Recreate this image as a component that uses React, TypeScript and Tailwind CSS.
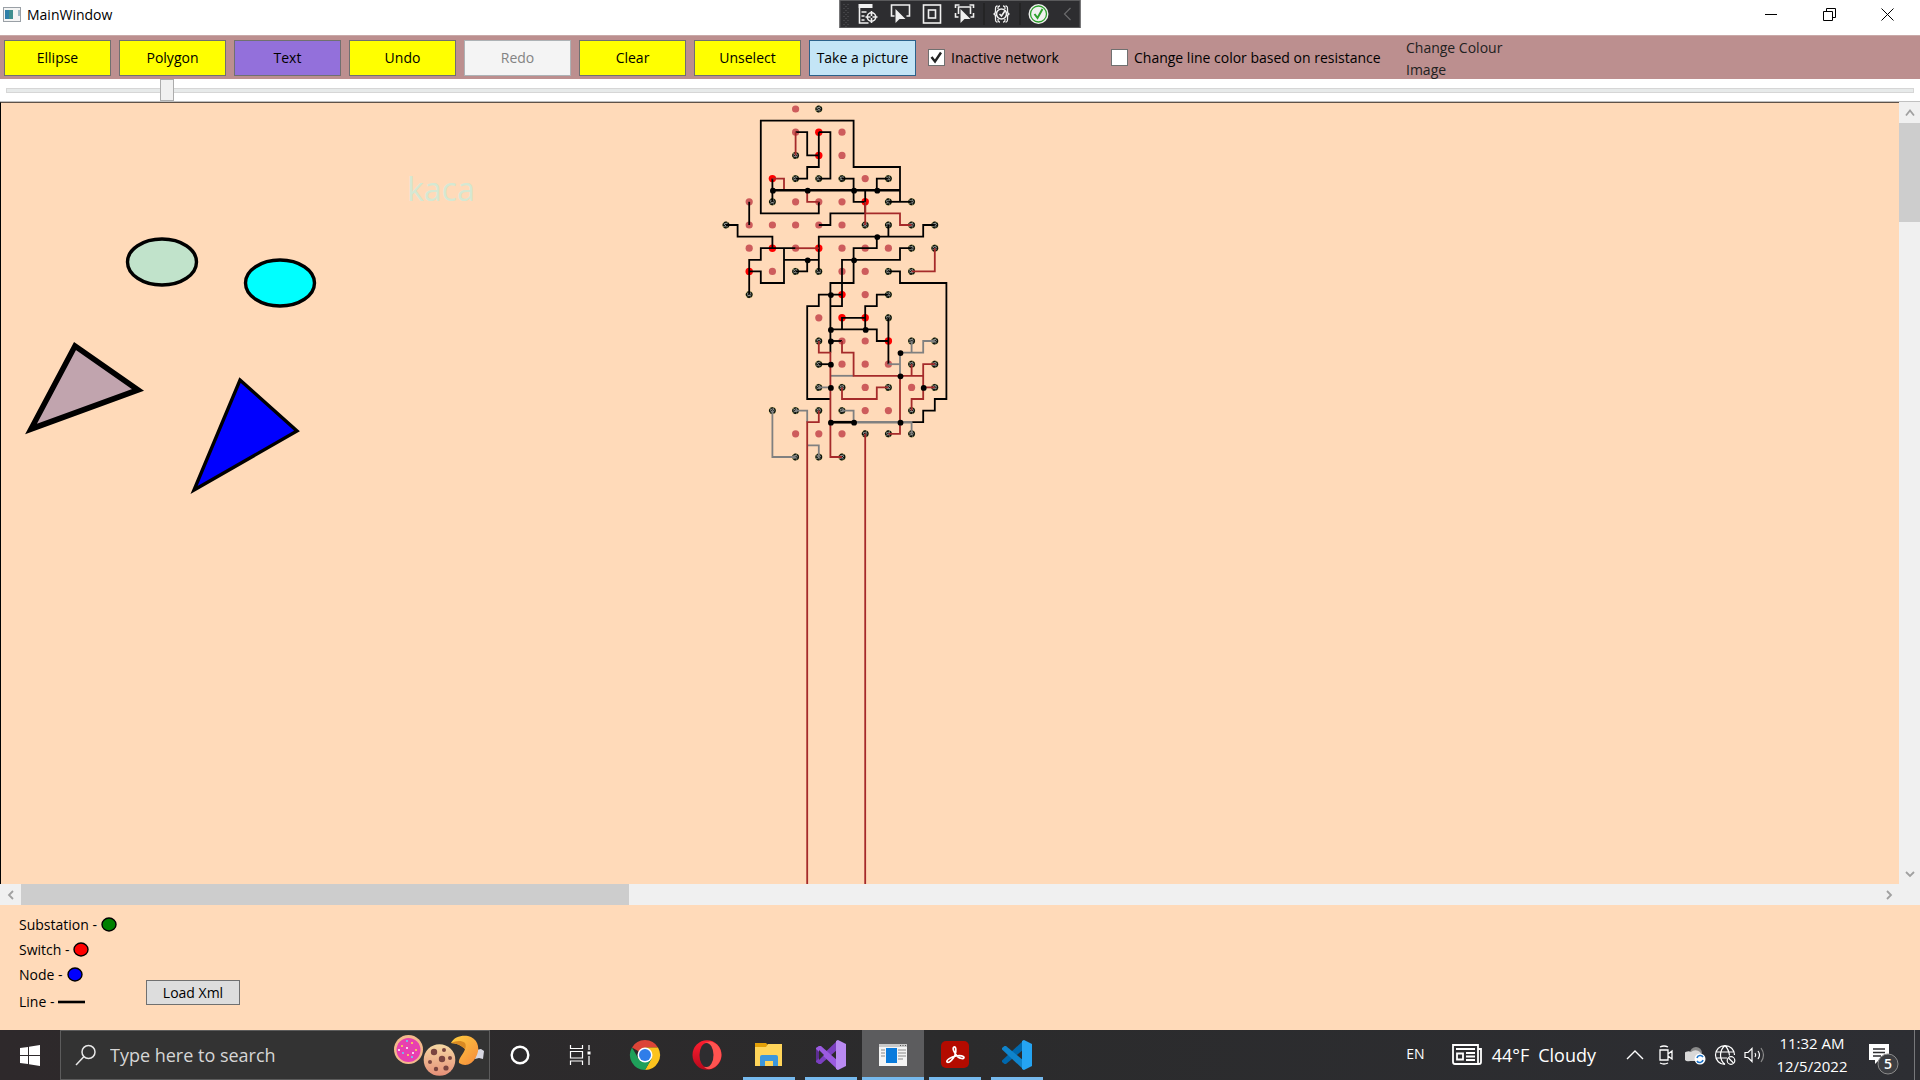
import React from "react";

/* ---------- network diagram ---------- */

// Diagram coordinates are half-grid units; one unit is UNIT pixels.
const UNIT = 11.6;
const ORIGIN_X = 725;
const ORIGIN_Y = 6;

const px = (x: number) => ORIGIN_X + x * UNIT;
const py = (y: number) => ORIGIN_Y + y * UNIT;

const toPoints = (line: string) =>
  line
    .split(" ")
    .map((p) => {
      const [x, y] = p.split(",").map(Number);
      return `${px(x)},${py(y)}`;
    })
    .join(" ");

const blackLines = [
  "16,8 14,8", "8,8 8,9 3,9 3,1 11,1 11,5 15,5 15,8",
  "6,2 7,2 7,4 8,4", "8,2 8,5 7,5 7,6 6,6", "8,2 9,2 9,6 8,6",
  "4,6 4,8", "4,7 15,7", "10,6 11,6 11,8 12,8", "14,6 13,6 13,7",
  "12,7 12,9 9,9 9,10 8,10", "2,8 2,10",
  "0,10 1,10 1,11 4,11 4,12", "18,10 17,10 17,11 8,11 8,14", "14,10 14,11",
  "13,11 13,12 11,12 11,15 9,15 9,21", "6,12 3,12 3,13 2,13 2,16",
  "2,14 3,14 3,15 5,15 5,12", "5,13 8,13", "7,13 7,14 6,14",
  "16,12 15,12 15,13 10,13 10,17 9,17", "10,16 8,16 8,17 7,17 7,25 9,25",
  "14,14 15,14 15,15 19,15 19,25 18,25 18,26 17,26 17,27 16,27", "11,27 9,27",
  "14,16 13,16 13,17 12,17 12,19", "12,18 10,18 10,19", "9,19 13,19 13,20 14,20",
  "14,18 14,22", "9,20 10,20", "8,22 9,22",
];
const redLines = [
  "6,2 6,4", "4,6 5,6 5,7", "7,7 7,8 8,8", "12,8 12,10", "12,9 15,9 15,10 16,10",
  "6,12 8,12", "18,12 18,14 16,14", "8,20 8,21 9,21 9,30 10,30",
  "10,20 10,21 11,21 11,23 17,23", "18,22 17,22 17,25 16,25 16,26", "16,22 16,23",
  "17,24 18,24", "10,24 10,25 13,25 13,24 14,24", "15,23 15,28 14,28",
  "8,26 8,27 7,27 7,90", "12,28 12,90",
];
const grayLines = [
  "9,23 11,23", "8,24 9,24", "15,23 15,21 17,21 17,20 18,20", "16,20 16,21",
  "14,22 15,22", "11,27 16,27 16,28", "10,26 11,26 11,27", "4,26 4,30 6,30",
  "6,26 7,26 7,27", "7,29 8,29 8,30",
];
const junctions = [
  [4, 7], [7, 7], [11, 7], [13, 7], [13, 11], [7, 13], [11, 13], [9, 16], [9, 19],
  [12, 19], [9, 20], [9, 22], [9, 24], [15, 21], [15, 23], [17, 24], [9, 27], [11, 27], [15, 27],
];
// One row per grid line: overlapping entities, switches, plain nodes.
const rows: { y: number; pink: number[]; red: number[]; node: number[] }[] = [
  { y: 0, pink: [6], red: [], node: [8] },
  { y: 2, pink: [6, 10], red: [8], node: [] },
  { y: 4, pink: [10], red: [8], node: [6] },
  { y: 6, pink: [12], red: [4], node: [6, 8, 10, 14] },
  { y: 8, pink: [2, 6, 8, 10], red: [12], node: [4, 14, 16] },
  { y: 10, pink: [2, 4, 6, 8, 10], red: [], node: [0, 12, 14, 16, 18] },
  { y: 12, pink: [2, 6, 10, 12, 14], red: [4, 8], node: [16, 18] },
  { y: 14, pink: [4, 10, 12], red: [2], node: [6, 8, 14, 16] },
  { y: 16, pink: [12], red: [10], node: [2, 14] },
  { y: 18, pink: [8], red: [10, 12], node: [14] },
  { y: 20, pink: [10, 12], red: [14], node: [8, 16, 18] },
  { y: 22, pink: [10, 12, 14], red: [], node: [8, 16, 18] },
  { y: 24, pink: [12, 16], red: [], node: [8, 10, 14, 18] },
  { y: 26, pink: [12, 14], red: [], node: [4, 6, 8, 10, 16] },
  { y: 28, pink: [6, 8, 10], red: [], node: [12, 14, 16] },
  { y: 30, pink: [], red: [], node: [6, 8, 10] },
];

function Lines({ lines, color }: { lines: string[]; color: string }) {
  return (
    <g fill="none" stroke={color} strokeWidth="1.8">
      {lines.map((l) => (
        <polyline key={l} points={toPoints(l)} />
      ))}
    </g>
  );
}

function Drawing() {
  return (
    <svg className="absolute inset-0 h-full w-full" aria-label="Network canvas">
      <text x="406" y="98" fontSize="32" fill="#d5e8d3">kaca</text>
      <g stroke="#000" strokeWidth="3.4">
        <ellipse cx="161" cy="159" rx="34.5" ry="23" fill="#c1e3cb" />
        <ellipse cx="279" cy="180" rx="34.5" ry="23" fill="#00ffff" />
        <polygon points="74,243 137,287 30,326" fill="#c1a4ae" strokeWidth="5.6" />
        <polygon points="239,277 296,328 193,387" fill="#0000ff" />
      </g>
      {rows.map(({ y, pink, red, node }) => (
        <g key={y}>
          {pink.map((x) => <circle key={`p${x}`} cx={px(x)} cy={py(y)} r="3.6" fill="#cd5c5c" />)}
          {red.map((x) => <circle key={`r${x}`} cx={px(x)} cy={py(y)} r="3.7" fill="#f00" />)}
          {node.map((x) => (
            <g key={`n${x}`}>
              <circle cx={px(x)} cy={py(y)} r="3.6" fill="#b5b06a" />
              <circle cx={px(x)} cy={py(y)} r="2.8" fill="#8b918b" stroke="#0b0f0b" strokeWidth="1.3" strokeDasharray="3 0.6" />
              <path d={`M${px(x) - 2} ${py(y) + 1}l2 -2l2 2M${px(x) - 1} ${py(y) + 2}h2`} stroke="#111" strokeWidth="1" fill="none" />
            </g>
          ))}
        </g>
      ))}
      <Lines lines={blackLines} color="#000" />
      <Lines lines={grayLines} color="#808080" />
      <Lines lines={redLines} color="#a52a2a" />
      <g fill="none" strokeWidth="2.6">
        <polyline points={toPoints("4,7 15,7")} stroke="#000" />
        <polyline points={toPoints("9,27 11,27")} stroke="#000" />
        <polyline points={toPoints("11,27 16,27")} stroke="#808080" />
      </g>
      {junctions.map(([x, y]) => (
        <circle key={`${x}-${y}`} cx={px(x) + 0.5} cy={py(y) + 0.5} r="2.9" fill="#000" />
      ))}
    </svg>
  );
}

/* ---------- window chrome ---------- */

function DebugBar() {
  return (
    <div className="absolute left-1/2 top-0 flex h-7 w-[241px] -translate-x-1/2 border border-[#5a5a5c] bg-[#2d2d30]">
      <svg width="239" height="26" viewBox="840 1 239 26" fill="none" stroke="#f0f0f0" strokeWidth="1.6">
        <g fill="#5a5a5c" stroke="none">
          {[4, 8, 12, 16, 20, 24].map((y) => (
            <React.Fragment key={y}>
              <rect x="843" y={y} width="1" height="1" />
              <rect x="847" y={y} width="1" height="1" />
              <rect x="845" y={y + 2} width="1" height="1" />
            </React.Fragment>
          ))}
        </g>
        <path d="M858 4h14v4h-14z" fill="#f0f0f0" stroke="none" />
        <path d="M859 8v15h9M861 12h5M861 16h3M861 20h3" />
        <circle cx="871" cy="17" r="4.2" />
        <path d="M871 11v5M871 18v5M865 17h5M872 17h5" />
        <path d="M894 16h-3V5h18v11h-3" />
        <path d="M895 9v14l4-4 2 0h4z" fill="#f0f0f0" stroke="none" />
        <rect x="923" y="5" width="17" height="18" />
        <rect x="928" y="10" width="7" height="8" />
        <path d="M955 8V5h4M969 5h4v3M955 13v4h3M973 13v4h-3M958 14V7h12v7" />
        <path d="M960 9v14l4-4 2 0h4z" fill="#f0f0f0" stroke="none" />
        <path d="M983.500 3v22M1019.500 3v22" stroke="#222224" />
        <path d="M997 6c-2 0-2 1-2 3v2c0 2-1 3-2 3 1 0 2 1 2 3v2c0 2 0 3 2 3M999.500 6c-2 0-2 1-2 3M999.500 22c-2 0-2-1-2-3M1005 6c2 0 2 1 2 3v2c0 2 1 3 2 3-1 0-2 1-2 3v2c0 2 0 3-2 3M1002.500 6c2 0 2 1 2 3M1002.500 22c2 0 2-1 2-3" strokeWidth="1.300" />
        <circle cx="1001" cy="14" r="5" />
        <path d="M999 14l2 2 4-6" />
        <circle cx="1038" cy="14" r="10" fill="#f0f0f0" stroke="none" />
        <circle cx="1038" cy="14" r="8" stroke="#2ca02c" strokeWidth="1.300" />
        <path d="M1034 14l3 4 5-9" stroke="#2ca02c" strokeWidth="2" />
        <path d="M1070 8l-6 6 6 6" stroke="#6a6a6c" strokeWidth="1.200" />
      </svg>
    </div>
  );
}

function TitleBar() {
  const button = "flex h-7 w-[58px] items-center justify-center";
  return (
    <header className="relative flex h-[35px] shrink-0 items-start justify-between bg-white">
      <div className="flex h-7 items-center gap-[6px] pl-[3px] text-[14px]">
        <svg width="18" height="15" viewBox="0 0 18 15">
          <rect x=".5" y=".5" width="17" height="14" fill="#f4f4f4" stroke="#9aa0a6" />
          <rect x="2" y="3" width="8" height="9" fill="#3f8f8f" />
          <path d="M2 3h4v9H2z" fill="#2f7fa8" />
          <path d="M16 3v6" stroke="#49809a" />
        </svg>
        <h1>MainWindow</h1>
      </div>
      <DebugBar />
      <div className="flex pr-1">
        <button className={button} aria-label="Minimize">
          <svg width="12" height="12" viewBox="0 0 12 12"><path d="M0 6.500h12" stroke="#000" /></svg>
        </button>
        <button className={button} aria-label="Restore">
          <svg width="13" height="13" viewBox="0 0 13 13" fill="none" stroke="#000"><path d="M.5 3.500h9v9h-9zM3.500 3V.5h9v9H10" /></svg>
        </button>
        <button className={button} aria-label="Close">
          <svg width="13" height="13" viewBox="0 0 13 13" fill="none" stroke="#000"><path d="M.5.5l12 12M12.500.5l-12 12" /></svg>
        </button>
      </div>
    </header>
  );
}

const tools = [
  { label: "Ellipse", style: "border-[#707070] bg-[#ffff00]" },
  { label: "Polygon", style: "border-[#707070] bg-[#ffff00]" },
  { label: "Text", style: "border-[#707070] bg-[#9370db]" },
  { label: "Undo", style: "border-[#707070] bg-[#ffff00]" },
  { label: "Redo", style: "border-[#adb2b5] bg-[#f4f4f4] text-[#838383]", disabled: true },
  { label: "Clear", style: "border-[#707070] bg-[#ffff00]" },
  { label: "Unselect", style: "border-[#707070] bg-[#ffff00]" },
  { label: "Take a picture", style: "border-[#2c628b] bg-[#c4e5f6]" },
];

function Check({ label, checked }: { label: string; checked?: boolean }) {
  return (
    <label className="flex items-center gap-[6px] whitespace-nowrap">
      <span className="grid">
        <input type="checkbox" defaultChecked={checked} className="peer col-start-1 row-start-1 h-[17px] w-[17px] appearance-none border border-[#707070] bg-white" />
        <svg className="pointer-events-none invisible col-start-1 row-start-1 peer-checked:visible" width="17" height="17" viewBox="0 0 17 17">
          <path d="M3.500 8l3.500 4.500 6-9" fill="none" stroke="#212121" strokeWidth="2.400" />
        </svg>
      </span>
      {label}
    </label>
  );
}

function Toolbar() {
  return (
    <div className="flex h-11 shrink-0 items-center border-t border-[#c9a9a8] bg-[#bc8f8f] pl-1 text-[14px]">
      <div className="flex gap-2">
        {tools.map((t) => (
          <button key={t.label} disabled={t.disabled} className={`h-9 w-[107px] whitespace-nowrap border ${t.style}`}>
            {t.label}
          </button>
        ))}
      </div>
      <div className="ml-3 w-[183px]"><Check label="Inactive network" checked /></div>
      <div className="w-[295px]"><Check label="Change line color based on resistance" /></div>
      <nav className="flex flex-col items-start pt-[2px] text-[#212121]">
        <button className="h-[22px] leading-[22px]">Change Colour</button>
        <button className="h-[22px] leading-[22px]">Image</button>
      </nav>
    </div>
  );
}

function ZoomSlider() {
  return (
    <div className="flex h-[23px] shrink-0 border-b border-[#c0c0c0] bg-white px-[6px]">
      <input
        type="range"
        aria-label="Zoom"
        min={0}
        max={1000}
        defaultValue={81}
        className="h-[22px] w-full appearance-none bg-transparent [&::-webkit-slider-runnable-track]:h-[5px] [&::-webkit-slider-runnable-track]:border [&::-webkit-slider-runnable-track]:border-[#d6d6d6] [&::-webkit-slider-runnable-track]:bg-[#e7eaea] [&::-webkit-slider-thumb]:mt-[-10px] [&::-webkit-slider-thumb]:h-[22px] [&::-webkit-slider-thumb]:w-[14px] [&::-webkit-slider-thumb]:appearance-none [&::-webkit-slider-thumb]:border [&::-webkit-slider-thumb]:border-[#acacac] [&::-webkit-slider-thumb]:bg-[#f0f0f0]"
      />
    </div>
  );
}

function ScrollArrow({ d, label }: { d: string; label: string }) {
  return (
    <button aria-label={label} className="flex h-[21px] w-[21px] shrink-0 items-center justify-center bg-[#f0f0f0]">
      <svg width="12" height="12" viewBox="0 0 12 12" fill="none" stroke="#a0a0a0" strokeWidth="1.800"><path d={d} /></svg>
    </button>
  );
}

function CanvasArea() {
  return (
    <main className="grid min-h-0 flex-1 grid-cols-[1fr_21px] grid-rows-[1fr_21px] bg-[#f0f0f0]">
      <div className="relative overflow-hidden border-l border-t border-l-black border-t-[#5f5248] bg-[#ffdab9]">
        <Drawing />
      </div>
      <div className="flex flex-col">
        <ScrollArrow label="Scroll up" d="M2 8.500l4-5 4 5" />
        <div className="h-[99px] bg-[#cdcdcd]" />
        <div className="flex-1" />
        <ScrollArrow label="Scroll down" d="M2 4l4 4 4-4" />
      </div>
      <div className="flex">
        <ScrollArrow label="Scroll left" d="M8 2L4 6l4 4" />
        <div className="w-[32%] bg-[#cdcdcd]" />
        <div className="flex-1" />
        <ScrollArrow label="Scroll right" d="M4 2l4 4-4 4" />
      </div>
    </main>
  );
}

function LegendItem({ label, color }: { label: string; color: string }) {
  return (
    <li className="flex h-[25px] items-center gap-1">
      {label}
      <svg width="16" height="15" viewBox="0 0 16 15"><ellipse cx="8" cy="7.500" rx="7" ry="6.500" fill={color} stroke="#000" strokeWidth="1.400" /></svg>
    </li>
  );
}

function Legend() {
  return (
    <footer className="flex h-[125px] shrink-0 items-start bg-[#ffdab9] pt-[7px] pl-[19px] text-[14px]">
      <ul className="w-[127px]">
        <LegendItem label="Substation -" color="#008000" />
        <LegendItem label="Switch -" color="#f00" />
        <LegendItem label="Node -" color="#00f" />
        <li className="flex h-[28px] items-center gap-1">
          Line -
          <svg width="27" height="4" viewBox="0 0 27 4" className="mt-[2px]"><path d="M0 2h27" stroke="#000" strokeWidth="2.600" /></svg>
        </li>
      </ul>
      <button className="mt-[68px] h-[25px] w-[94px] border border-[#707070] bg-[#dddddd] leading-none">Load Xml</button>
    </footer>
  );
}

/* ---------- taskbar ---------- */

function Treats() {
  return (
    <svg width="92" height="46" viewBox="394 1032 92 46">
      <defs>
        <linearGradient id="cookie" x1="0" y1="0" x2="0" y2="1"><stop offset="0" stopColor="#f6d9a4" /><stop offset="1" stopColor="#e58f78" /></linearGradient>
        <linearGradient id="fortune" x1="0" y1="0" x2="1" y2="1"><stop offset="0" stopColor="#ffcf3f" /><stop offset="1" stopColor="#f58a3c" /></linearGradient>
      </defs>
      <path d="M476 1050l5-1 3 2-1 8-4-1-4 1z" fill="#d7d7e2" />
      <path d="M451 1043c3-7 14-9 20-6 8 4 9 13 5 20-4 8-11 10-17 6-1-5 5-9 6-14-4-4-9-6-14-6z" fill="url(#fortune)" />
      <path d="M451 1043c5 0 10 2 14 6 1-2 1-4 0-6-4-3-9-2-14 0z" fill="#d98a22" />
      <circle cx="408.500" cy="1049.500" r="14.500" fill="#f3b98c" />
      <circle cx="408.500" cy="1050" r="12" fill="#e83fb0" />
      <g fill="#ffe14d"><circle cx="402" cy="1046" r="1" /><circle cx="412" cy="1043" r="1" /><circle cx="408" cy="1055" r="1" /><circle cx="416" cy="1050" r="1" /></g>
      <g fill="#5fd6ff"><circle cx="407" cy="1041" r="1" /><circle cx="403" cy="1053" r="1" /><circle cx="412" cy="1057" r="1" /></g>
      <g fill="#fff"><circle cx="407" cy="1048" r="1" /><circle cx="413" cy="1053" r="1" /><circle cx="399" cy="1050" r="1" /></g>
      <circle cx="439.500" cy="1060" r="15.800" fill="url(#cookie)" />
      <g fill="#7a4540"><circle cx="434" cy="1052" r="3.200" /><circle cx="444" cy="1050" r="2" /><circle cx="442" cy="1059" r="3.200" /><circle cx="430" cy="1062" r="2" /><circle cx="450" cy="1058" r="2" /><circle cx="446" cy="1068" r="2.600" /><circle cx="436" cy="1069" r="2.200" /></g>
    </svg>
  );
}

const iconBox = { width: 32, height: 32, viewBox: "0 0 32 32" };

const ChromeIcon = () => (
  <svg {...iconBox}>
    <path d="M16 16L3 8.500A15 15 0 0 1 29 8.500H16z" fill="#dc4437" />
    <path d="M16 8.500h13A15 15 0 0 1 16 31l6.500-11.250z" fill="#fcc31e" />
    <path d="M3 8.500A15 15 0 0 0 16 31l6.500-11.250L9.500 19.750z" fill="#1fa05a" />
    <circle cx="16" cy="16" r="7.500" fill="#fff" />
    <circle cx="16" cy="16" r="6" fill="#2f7de9" />
  </svg>
);
const OperaIcon = () => (
  <svg {...iconBox}>
    <defs><linearGradient id="op" x1="0" y1="0" x2="0" y2="1"><stop offset="0" stopColor="#ff1f30" /><stop offset="1" stopColor="#b8091c" /></linearGradient></defs>
    <ellipse cx="16" cy="16" rx="14.500" ry="14.800" fill="url(#op)" />
    <path d="M19 2.500c14 2 16 22 1 27.500-4 .5-5-.5-7-2 12 0 12-24 0-24z" fill="#ff5350" />
    <ellipse cx="15.500" cy="16" rx="7" ry="12" fill="#2e2d30" />
  </svg>
);
const FolderIcon = () => (
  <svg {...iconBox}>
    <path d="M2 4h11l3 3-2 3H2z" fill="#e3a008" />
    <path d="M2 8h11l2-3h14v22H2z" fill="#ffd55a" />
    <path d="M7 27V18q0-2 2-2h14q2 0 2 2v9h-5v-5h-8v5z" fill="#3c97dc" />
  </svg>
);
const VisualStudioIcon = () => (
  <svg {...iconBox}>
    <path d="M1 9l3-2 3 2v14l-3 2-3-2z" fill="#5c2d91" />
    <path d="M23 1L1 22v1l3 2h2L23 10z" fill="#7b3fc0" />
    <path d="M1 9l3-2h2l17 15v9L1 10z" fill="#9b5be0" />
    <path d="M4 11l5 5-5 5z" fill="#2e2d30" />
    <path d="M23 1l8 4v22l-8 4-2-1V2z" fill="#b98af2" />
  </svg>
);
const WindowAppIcon = () => (
  <svg {...iconBox}>
    <path d="M2 5h28v22H2z" fill="#f4f4f4" />
    <path d="M2 5h28v3H2z" fill="#c8c8c8" />
    <path d="M23 6.500h1M25.500 6.500h1M28 6.500h1" stroke="#555" />
    <path d="M4 11h4M4 14h4M4 17h4M21 11h8M21 14h8M21 17h8M21 20h5" stroke="#8a8a8a" />
    <path d="M9 9h11v15H9z" fill="#0a7bdc" />
  </svg>
);
const AcrobatIcon = () => (
  <svg {...iconBox}>
    <rect x="2" y="2" width="28" height="27" rx="5" fill="#b30b00" />
    <path d="M8 23c-1-2 4-5 9-6 4-1 8 0 8 1.500 0 2-4 1-6.500-1C15 14 13 9 15 8s2.500 4 1 8c-1 3-6 9-8 7z" fill="none" stroke="#fff" strokeWidth="1.700" />
  </svg>
);
const CodeIcon = () => (
  <svg {...iconBox}>
    <path d="M23 1L1 21.500v1.500l2.500 2h1.500L23 10z" fill="#0068ad" />
    <path d="M1 10.500L1 9l2.500-2H5l18 15v9z" fill="#0f84cc" />
    <path d="M23 1l8 4v22l-8 4-2-1V2z" fill="#25a4f2" />
  </svg>
);
const CortanaIcon = () => (
  <svg {...iconBox}><circle cx="16" cy="16" r="8.300" fill="none" stroke="#fff" strokeWidth="2.400" /></svg>
);
const TaskViewIcon = () => (
  <svg {...iconBox} fill="none" stroke="#fff" strokeWidth="1.200">
    <path d="M6.500 6v3.500h12V6M6.500 26v-4h12v4M6.500 12.500h12v6.500h-12zM25 6v5M25 17v9" />
    <path d="M23.500 12.500h3v3h-3z" fill="#fff" stroke="none" />
  </svg>
);

const systemButtons = [
  { name: "Cortana", icon: <CortanaIcon /> },
  { name: "Task View", icon: <TaskViewIcon /> },
];

const pinned = [
  { name: "Chrome", icon: <ChromeIcon /> },
  { name: "Opera", icon: <OperaIcon /> },
  { name: "File Explorer", icon: <FolderIcon />, open: true },
  { name: "Visual Studio", icon: <VisualStudioIcon />, open: true },
  { name: "MainWindow", icon: <WindowAppIcon />, open: true, active: true },
  { name: "Acrobat", icon: <AcrobatIcon />, open: true },
  { name: "Visual Studio Code", icon: <CodeIcon />, open: true },
];

function Taskbar() {
  return (
    <div className="flex h-[50px] shrink-0 items-stretch bg-linear-to-r from-[#2e292b] via-[#2b2b2c] to-[#2d2e33] text-white">
      <button aria-label="Start" className="flex w-[60px] shrink-0 items-center justify-center">
        <svg width="20" height="21" viewBox="0 0 20 21" fill="#fff"><path d="M0 3l8-1v8H0zM9 1.800L20 0v10H9zM0 11h8v8l-8-1zM9 11h11v10L9 19.200z" /></svg>
      </button>
      <label className="flex w-[430px] shrink-0 items-center border border-[#5c5c5c] bg-[#333333] pl-[14px]">
        <svg width="22" height="22" viewBox="0 0 22 22" fill="none" stroke="#e8e8e8" strokeWidth="1.500"><circle cx="13.500" cy="8" r="6.500" /><path d="M9 12.500L1 21" /></svg>
        <input aria-label="Search" placeholder="Type here to search" className="ml-[13px] w-0 flex-1 bg-transparent text-[18px] outline-none placeholder:text-[#d6d6d6]" />
        <Treats />
        <span className="w-[3px]" />
      </label>
      <div className="flex">
        {systemButtons.map((b) => (
          <button key={b.name} aria-label={b.name} className="flex w-[60px] items-center justify-center">
            {b.icon}
          </button>
        ))}
      </div>
      <div className="ml-[4px] flex">
        {pinned.map((p) => (
          <button key={p.name} aria-label={p.name} className={`relative flex w-[62px] items-center justify-center ${p.active ? "bg-[#5c5c5e]" : ""}`}>
            {p.icon}
            {p.open && <span className={`absolute bottom-0 h-[3px] bg-[#76b9ed] ${p.active ? "inset-x-0" : "inset-x-[5px]"}`} />}
          </button>
        ))}
      </div>
      <div className="ml-auto flex items-center">
        <span className="mb-[3px] text-[14px]">EN</span>
        <svg className="ml-[27px]" width="30" height="22" viewBox="0 0 30 22" fill="none" stroke="#fff" strokeWidth="1.800">
          <path d="M1 1h25v19H3q-2 0-2-2zM26 5h3v13q0 2-2 2h-3M4 5h19M14 9h9M14 12.500h9M14 16h9" />
          <path d="M5 9.500h6v6H5z" />
        </svg>
        <span className="ml-[10px] flex gap-[9px] text-[18px]"><span>44°F</span><span>Cloudy</span></span>
        <svg className="ml-[30px]" width="18" height="18" viewBox="0 0 18 18" fill="none" stroke="#fff" strokeWidth="1.400"><path d="M1 13l8-8 8 8" /></svg>
        <svg className="ml-[14px]" width="16" height="20" viewBox="0 0 16 20" fill="none" stroke="#fff" strokeWidth="1.300"><path d="M2 5h8v10H2zM10 9l4-3v8l-4-3M2 2q4-2 8 0M2 18q4 2 8 0" /></svg>
        <svg className="ml-[11px]" width="22" height="20" viewBox="0 0 22 20">
          <circle cx="11" cy="8" r="6" fill="#8a8a8a" /><path d="M5 16a5 5 0 1 1 1-9 6 6 0 0 1 9 9z" fill="#d8d8d8" />
          <circle cx="15" cy="14" r="5.500" fill="#fff" /><path d="M12 13a3.300 3.300 0 0 1 6-1M18 15a3.300 3.300 0 0 1-6 1" fill="none" stroke="#1a73c8" strokeWidth="1.600" />
        </svg>
        <svg className="ml-[7px]" width="22" height="22" viewBox="0 0 22 22" fill="none" stroke="#fff" strokeWidth="1.200">
          <path d="M20.500 11A9.500 9.500 0 1 0 11 20.500M2 8h18M2 14h11M11 1.500c-6 5-6 14 0 19M11 1.500c3 3 4 6 4.500 10" />
          <circle cx="17" cy="16.500" r="3.800" /><path d="M14.500 14l5 5" />
        </svg>
        <svg className="ml-[8px]" width="21" height="20" viewBox="0 0 21 20" fill="none" stroke="#fff" strokeWidth="1.200"><path d="M1 7.500h3l4-4v13l-4-4H1zM11 8q1.500 2 0 4M14 6q3 4 0 8" /><path d="M17 3q5 7 0 14" stroke="#8a8a8a" /></svg>
        <div className="ml-[9px] w-[76px] text-center text-[15px] leading-[23px]">
          <div>11:32 AM</div>
          <div>12/5/2022</div>
        </div>
        <button aria-label="Notifications" className="ml-[19px] mr-[15px] mt-[8px]">
          <svg width="30" height="34" viewBox="0 0 30 34">
            <path d="M0 2h20v16H10l-4 4v-4H0z" fill="#fff" />
            <path d="M4 7h12M4 10.500h12M4 14h8" stroke="#2d2d30" strokeWidth="1.300" />
            <circle cx="19" cy="22" r="10" fill="#3d3e42" stroke="#8c8c8c" />
            <text x="19" y="27" textAnchor="middle" fontSize="14" fontWeight="600" fill="#fff">5</text>
          </svg>
        </button>
        <span className="h-[50px] w-[6px] border-l border-[#77787b]" />
      </div>
    </div>
  );
}

export default function App() {
  return (
    <div className="flex h-screen flex-col overflow-hidden bg-white font-['Open_Sans','Noto_Sans',sans-serif] text-black">
      <TitleBar />
      <Toolbar />
      <ZoomSlider />
      <CanvasArea />
      <Legend />
      <Taskbar />
    </div>
  );
}
